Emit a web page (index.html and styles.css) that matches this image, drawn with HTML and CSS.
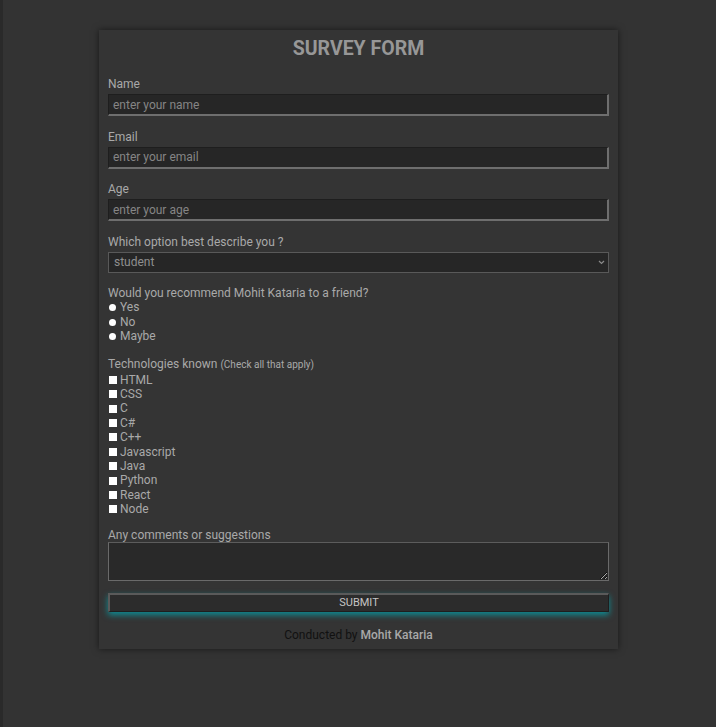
FILE: index.html
```html
<!DOCTYPE html>
<html lang="en">
<head>
<meta charset="utf-8">
<title>Survey Form</title>
<link rel="stylesheet" href="styles.css">
</head>
<body>
<main class="page">
  <form class="survey" id="survey-form">
    <h1 class="title" id="title">SURVEY FORM</h1>

    <div class="group">
      <label class="label" for="name">Name</label>
      <input class="field" id="name" type="text" placeholder="enter your name">
    </div>

    <div class="group">
      <label class="label" for="email">Email</label>
      <input class="field" id="email" type="email" placeholder="enter your email">
    </div>

    <div class="group">
      <label class="label" for="age">Age</label>
      <input class="field" id="age" type="number" placeholder="enter your age">
    </div>

    <div class="group">
      <label class="label" for="role">Which option best describe you ?</label>
      <div class="select-wrap">
        <select class="select" id="role">
          <option>student</option>
          <option>professional</option>
          <option>other</option>
        </select>
        <svg class="chev" width="7" height="5" viewBox="0 0 7 5"><path d="M1 1 L3.5 3.5 L6 1" fill="none" stroke="#8a8a8a" stroke-width="1.2"/></svg>
      </div>
    </div>

    <div class="group">
      <p class="label label-list">Would you recommend Mohit Kataria to a friend?</p>
      <label class="option"><input class="radio" type="radio" name="rec" value="yes">Yes</label>
      <label class="option"><input class="radio" type="radio" name="rec" value="no">No</label>
      <label class="option"><input class="radio" type="radio" name="rec" value="maybe">Maybe</label>
    </div>

    <div class="group group-tech">
      <p class="label label-list">Technologies known <span class="hint">(Check all that apply)</span></p>
      <label class="option"><input class="check" type="checkbox">HTML</label>
      <label class="option"><input class="check" type="checkbox">CSS</label>
      <label class="option"><input class="check" type="checkbox">C</label>
      <label class="option"><input class="check" type="checkbox">C#</label>
      <label class="option"><input class="check" type="checkbox">C++</label>
      <label class="option"><input class="check" type="checkbox">Javascript</label>
      <label class="option"><input class="check" type="checkbox">Java</label>
      <label class="option"><input class="check" type="checkbox">Python</label>
      <label class="option"><input class="check" type="checkbox">React</label>
      <label class="option"><input class="check" type="checkbox">Node</label>
    </div>

    <div class="group group-last">
      <label class="label label-tight" for="comments">Any comments or suggestions</label>
      <textarea class="area" id="comments"></textarea>
    </div>

    <button class="submit" type="button">SUBMIT</button>

    <p class="credit">Conducted by <span class="author">Mohit Kataria</span></p>
  </form>
</main>
</body>
</html>
```

FILE: styles.css
```css
html {
  background: #333333;
}

body {
  margin: 0;
  min-height: 727px;
  background: #333333;
  border-left: 3px solid #2a2a2a;
  font-family: Roboto, "Liberation Sans", sans-serif;
  color: #a9a9a9;
}

.page {
  display: flex;
  justify-content: center;
  padding: 30px 2px 0 0;
}

.survey {
  width: 519px;
  box-sizing: border-box;
  padding: 0 9px 0 9px;
  background: #343434;
  box-shadow: 0 0 7px rgba(0, 0, 0, 0.55);
}

.title {
  margin: 0;
  padding: 7px 0 16px;
  text-align: center;
  font-size: 19.5px;
  line-height: 24px;
  font-weight: 700;
  color: #979797;
}

.group {
  margin-bottom: 13.5px;
}

.group-tech {
  margin-bottom: 11px;
}

.group-last {
  margin-bottom: 12px;
}

.label {
  display: block;
  margin: 0 0 3px;
  font-size: 12px;
  line-height: 14px;
  color: #a9a9a9;
}

.label-list {
  margin-bottom: 0;
  line-height: 14.4px;
}

.label-tight {
  margin-bottom: 0;
}

.hint {
  font-size: 10px;
}

.field {
  display: block;
  width: 100%;
  height: 22px;
  box-sizing: border-box;
  margin: 0;
  padding: 0 4px;
  background: #262626;
  border-style: solid;
  border-width: 1px 2px 2px 1px;
  border-color: #1e1e1e #6e6e6e #6e6e6e #1e1e1e;
  font-family: inherit;
  font-size: 12px;
  color: #8a8a8a;
  outline: none;
}

.field::placeholder {
  color: #858585;
}

.select-wrap {
  position: relative;
}

.select {
  display: block;
  width: 100%;
  height: 21px;
  box-sizing: border-box;
  margin: 0;
  padding: 0 5px;
  background: #262626;
  border: 1px solid #595959;
  border-radius: 0;
  appearance: none;
  -webkit-appearance: none;
  font-family: inherit;
  font-size: 12px;
  color: #8f8f8f;
  outline: none;
}

.chev {
  position: absolute;
  right: 4px;
  top: 8px;
}

.option {
  display: flex;
  align-items: center;
  font-size: 12px;
  line-height: 14.4px;
  color: #a9a9a9;
}

.radio,
.check {
  appearance: none;
  -webkit-appearance: none;
  margin: 0 4px 0 1px;
  width: 7px;
  height: 7px;
  background: #ffffff;
  border: 0;
  flex: none;
}

.radio {
  border-radius: 50%;
}

.check {
  width: 8px;
  height: 8px;
  margin-right: 3px;
}

.area {
  display: block;
  width: 100%;
  height: 39px;
  box-sizing: border-box;
  margin: 0;
  background: #292929;
  border: 1px solid #6a6a6a;
  border-top-color: #5c5c5c;
  font-family: inherit;
  font-size: 12px;
  color: #aaa;
  resize: vertical;
  outline: none;
}

.submit {
  display: block;
  width: 100%;
  height: 19px;
  box-sizing: border-box;
  margin: 0;
  padding: 0;
  background: #2c2c2c;
  border-style: solid;
  border-width: 2px 1px 1px 2px;
  border-color: #5a5a5a #1e1e1e #1e1e1e #5a5a5a;
  box-shadow: 0 3px 6px rgba(0, 170, 180, 0.75);
  font-family: inherit;
  font-size: 11px;
  color: #c4c4c4;
  cursor: pointer;
}

.credit {
  margin: 0;
  padding: 16px 0 7px;
  text-align: center;
  font-size: 12px;
  line-height: 14px;
  color: #111111;
}

.author {
  font-weight: 500;
  color: #a9a9a9;
}
```
